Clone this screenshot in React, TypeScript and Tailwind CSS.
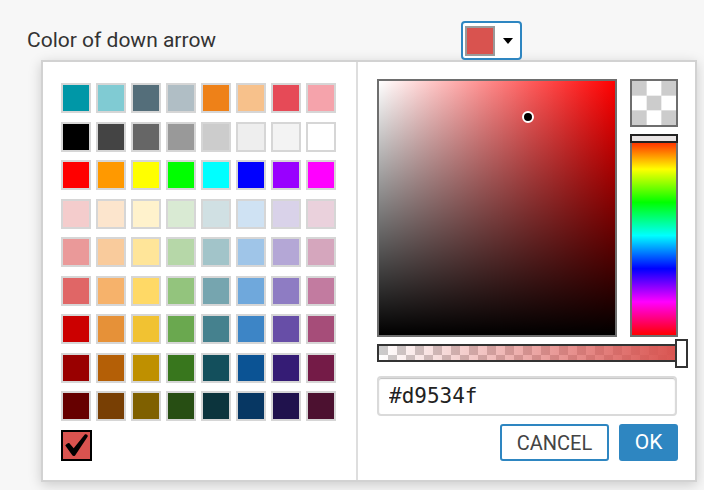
import React from 'react'

const PALETTE: string[][] = [
  ['#0097a7', '#80cbd3', '#546e7a', '#b0bec5', '#ee8118', '#f7c18b', '#e64a57', '#f5a3ab'],
  ['#000000', '#444444', '#666666', '#999999', '#cccccc', '#eeeeee', '#f3f3f3', '#ffffff'],
  ['#ff0000', '#ff9900', '#ffff00', '#00ff00', '#00ffff', '#0000ff', '#9900ff', '#ff00ff'],
  ['#f4cccc', '#fce5cd', '#fff2cc', '#d9ead3', '#d0e0e3', '#cfe2f3', '#d9d2e9', '#ead1dc'],
  ['#ea9999', '#f9cb9c', '#ffe599', '#b6d7a8', '#a2c4c9', '#9fc5e8', '#b4a7d6', '#d5a6bd'],
  ['#e06666', '#f6b26b', '#ffd966', '#93c47d', '#76a5af', '#6fa8dc', '#8e7cc3', '#c27ba0'],
  ['#cc0000', '#e69138', '#f1c232', '#6aa84f', '#45818e', '#3d85c6', '#674ea7', '#a64d79'],
  ['#990000', '#b45f06', '#bf9000', '#38761d', '#134f5c', '#0b5394', '#351c75', '#741b47'],
  ['#660000', '#783f04', '#7f6000', '#274e13', '#0c343d', '#073763', '#20124d', '#4c1130'],
]

const SELECTED = '#d9534f'

function CheckMark() {
  return (
    <svg viewBox="0 0 24 24" className="w-[25px] h-[24px]">
      <path
        d="M0.8 12.6C2 10.9 3.6 9.8 4.9 10.2L9.2 15.2L20.3 1.6C21.3 0.8 23.6 2 23.2 3.4L10.6 22.4C9.9 23.2 8.4 23.2 7.8 22.3Z"
        fill="#000"
      />
    </svg>
  )
}

function SwatchGrid() {
  return (
    <div className="grid grid-cols-[repeat(8,30px)] gap-x-[5px] gap-y-[8.5px]">
      {PALETTE.flat().map((c, i) => (
        <div
          key={i}
          className="w-[30px] h-[30px] border-2 border-[#d6d6d6]"
          style={{ backgroundColor: c }}
        />
      ))}
      {/* current colour */}
      <div className="w-[31px] h-[31px] border-2 border-black bg-[#d9534f] flex items-center justify-center">
        <CheckMark />
      </div>
    </div>
  )
}

function ColorField() {
  return (
    <div className="relative w-[240px] h-[258px] border-2 border-[#6e6e6e] bg-[#ff0000]">
      <div className="absolute inset-0 bg-[linear-gradient(to_right,#ffffff,rgba(255,255,255,0))]" />
      <div className="absolute inset-0 bg-[linear-gradient(to_bottom,rgba(0,0,0,0),#000000)]" />
      {/* picker cursor */}
      <div className="absolute left-[143px] top-[30px] w-[12px] h-[12px] rounded-full bg-black border-2 border-white" />
    </div>
  )
}

function HueColumn() {
  return (
    <div className="flex flex-col gap-[7px] ml-[13px]">
      <div className="w-[48px] h-[48px] border-2 border-[#6e6e6e] bg-[conic-gradient(#ffffff_25%,#cccccc_0_50%,#ffffff_0_75%,#cccccc_0)] bg-[length:29.33px_29.33px]" />
      <div className="relative w-[48px] h-[203px] border-2 border-[#6e6e6e] bg-[linear-gradient(to_bottom,#ff0000,#ffff00,#00ff00,#00ffff,#0000ff,#ff00ff,#ff0000)]">
        <div className="absolute -left-[2px] -right-[2px] -top-[2px] h-[9px] border-2 border-[#222] bg-[#e8e4e4]" />
      </div>
    </div>
  )
}

function AlphaBar() {
  return (
    <div className="relative mt-[7px] w-[305px] h-[18px]">
      <div className="absolute inset-0 border-2 border-[#333] bg-[conic-gradient(#ffffff_25%,#cccccc_0_50%,#ffffff_0_75%,#cccccc_0)] bg-[length:18px_18px]">
        <div className="w-full h-full bg-[linear-gradient(to_right,rgba(217,83,79,0),#d9534f)]" />
      </div>
      <div className="absolute left-[298px] -top-[5px] w-[13px] h-[29px] border-2 border-[#333] bg-white" />
    </div>
  )
}

export default function App() {
  return (
    <div
      className="w-[704px] h-[490px] bg-[#f7f7f7] overflow-hidden"
      style={{ fontFamily: 'Roboto, "Liberation Sans", sans-serif' }}
    >
      {/* Header row */}
      <div className="flex items-center pt-[21px] pl-[27px]">
        <div className="w-[434px] text-[21px] text-[#333] leading-none">Color of down arrow</div>
        <button className="w-[61px] h-[39px] border-2 border-[#2e86c1] rounded-[4px] bg-white flex items-center pl-[2px]">
          <span className="w-[30px] h-[30px] border-2 border-[#9a9a9a] bg-[#d9534f]" />
          <span className="ml-[8px] w-0 h-0 border-l-[5.5px] border-r-[5.5px] border-t-[6px] border-l-transparent border-r-transparent border-t-black" />
        </button>
      </div>

      {/* Popup */}
      <div className="ml-[41px] w-[656px] h-[422px] border-2 border-[#d2d2d2] bg-white flex shadow-[0_3px_12px_rgba(0,0,0,0.18)]">
        <div className="w-[315px] border-r-2 border-[#dedede] pl-[18px] pt-[21px]">
          <SwatchGrid />
        </div>

        <div className="flex-1 pl-[19px] pt-[17px]">
          <div className="flex">
            <ColorField />
            <HueColumn />
          </div>
          <AlphaBar />
          <input
            readOnly
            value={SELECTED}
            className="mt-[14px] w-[300px] h-[40px] px-[10px] border-2 border-[#dadada] rounded-[4px] shadow-[inset_0_1px_1px_rgba(0,0,0,0.25)] text-[21px] text-[#222] outline-none"
            style={{ fontFamily: '"DejaVu Sans Mono", monospace' }}
          />
          <div className="flex justify-end gap-[10px] mt-[8px] w-[301px]">
            <button className="w-[109px] h-[37px] border-2 border-[#2e86c1] rounded-[3px] bg-white text-[20px] text-[#444]">
              CANCEL
            </button>
            <button className="w-[59px] h-[37px] rounded-[3px] bg-[#2e86c1] text-[21px] text-white">
              OK
            </button>
          </div>
        </div>
      </div>
    </div>
  )
}
